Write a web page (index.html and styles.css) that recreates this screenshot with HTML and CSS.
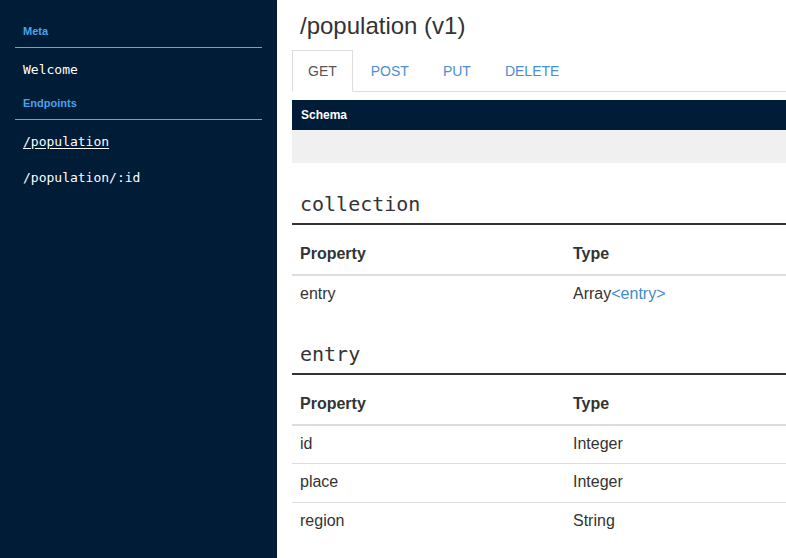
FILE: index.html
```
<!DOCTYPE html>
<html>
<head>
<meta charset="utf-8">
<link rel="stylesheet" href="styles.css">
</head>
<body>
<aside class="sidebar">
  <div class="nav-title">Meta</div>
  <ul class="nav-list">
    <li><a class="nav-link">Welcome</a></li>
  </ul>
  <div class="nav-title">Endpoints</div>
  <ul class="nav-list">
    <li><a class="nav-link active">/population</a></li>
    <li><a class="nav-link">/population/:id</a></li>
  </ul>
</aside>
<main class="main">
  <h1 class="title">/population (v1)</h1>
  <ul class="tabs">
    <li class="tab active">GET</li>
    <li class="tab">POST</li>
    <li class="tab">PUT</li>
    <li class="tab">DELETE</li>
  </ul>
  <div class="schema-bar">Schema</div>
  <div class="schema-body"></div>

  <h2 class="type-heading">collection</h2>
  <table class="props">
    <thead><tr><th class="col-prop">Property</th><th>Type</th></tr></thead>
    <tbody>
      <tr><td>entry</td><td>Array<a class="type-link">&lt;entry&gt;</a></td></tr>
    </tbody>
  </table>

  <h2 class="type-heading">entry</h2>
  <table class="props">
    <thead><tr><th class="col-prop">Property</th><th>Type</th></tr></thead>
    <tbody>
      <tr><td>id</td><td>Integer</td></tr>
      <tr><td>place</td><td>Integer</td></tr>
      <tr><td>region</td><td>String</td></tr>
    </tbody>
  </table>
</main>
</body>
</html>
```
FILE: styles.css
```
html, body {
  margin: 0;
  padding: 0;
  height: 100%;
  overflow: hidden;
}
body {
  display: flex;
  font-family: "Liberation Sans", Arial, sans-serif;
  font-size: 14px;
  color: #333;
  background: #fff;
}
.sidebar {
  width: 277px;
  flex: none;
  box-sizing: border-box;
  padding: 24px 15px 0;
  background: #011c37;
  height: 100%;
}
.nav-title {
  font-family: "Liberation Sans", Arial, sans-serif;
  font-weight: bold;
  font-size: 11px;
  line-height: 14px;
  color: #4aa3ea;
  padding: 0 8px 9px;
  border-bottom: 1px solid #58a8e4;
}
.nav-list {
  list-style: none;
  margin: 3px 0 9px;
  padding: 0;
}
.nav-list:last-child {
  margin-bottom: 0;
}
.nav-link {
  display: block;
  padding: 2px 8px 0;
  height: 34px;
  line-height: 34px;
  font-family: "DejaVu Sans Mono", "Liberation Mono", monospace;
  font-size: 13px;
  color: #ffffff;
}
.nav-link.active {
  text-decoration: underline;
  text-underline-offset: 2px;
}
.main {
  flex: 1;
  min-width: 0;
  padding-left: 15px;
}
.title {
  margin: 12px 0 11px;
  padding-left: 8px;
  font-size: 24px;
  font-weight: normal;
  line-height: 27px;
  color: #333;
}
.tabs {
  display: flex;
  list-style: none;
  margin: 0;
  padding: 0;
  border-bottom: 1px solid #ddd;
}
.tab {
  padding: 10px 15px;
  margin-right: 2px;
  margin-bottom: -1px;
  line-height: 20px;
  font-size: 14px;
  color: #4b8ed4;
  border: 1px solid transparent;
}
.tab.active {
  color: #555;
  background: #fff;
  border-color: #ddd #ddd transparent;
}
.schema-bar {
  margin-top: 8px;
  height: 30px;
  line-height: 30px;
  padding: 0 9px;
  background: #011c37;
  color: #fff;
  font-weight: bold;
  font-size: 12px;
}
.schema-body {
  height: 33px;
  background: #f0f0f0;
  margin-bottom: 3px;
}
.type-heading {
  margin: 29px 0 0;
  padding: 0 8px 7px;
  font-family: "DejaVu Sans Mono", "Liberation Mono", monospace;
  font-weight: normal;
  font-size: 20px;
  line-height: 24px;
  color: #333;
  border-bottom: 2px solid #333;
}
.props {
  width: 100%;
  margin-top: 11px;
  border-collapse: separate;
  border-spacing: 0;
  font-size: 16px;
}
.props th, .props td {
  text-align: left;
  padding: 7px 8px 9px;
  line-height: 22px;
}
.props tbody tr:first-child td {
  padding-bottom: 8px;
}
.props th {
  font-weight: bold;
  border-bottom: 2px solid #ddd;
}
.props .col-prop {
  width: 257px;
}
.props tbody tr + tr td {
  border-top: 1px solid #ddd;
}
.type-link {
  color: #428bca;
}
```
